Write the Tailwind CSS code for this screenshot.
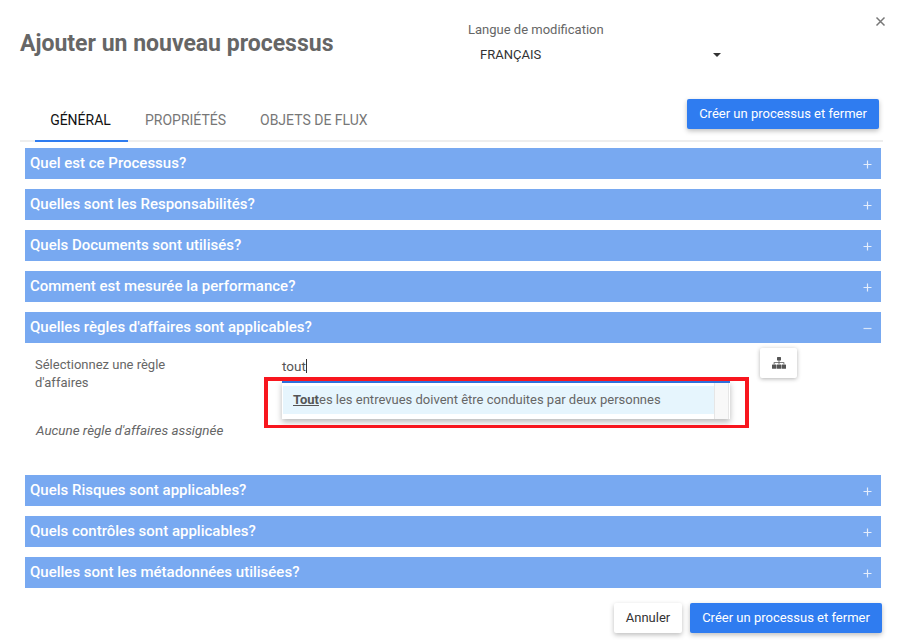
<!DOCTYPE html>
<html lang="fr">
<head>
<meta charset="utf-8">
<script src="https://cdn.jsdelivr.net/npm/@tailwindcss/browser@4"></script>
</head>
<body class="bg-white font-['Roboto',sans-serif] text-[#666]">
<div class="relative w-[903px] h-[641px] overflow-hidden">
  <!-- Header -->
  <header class="flex h-[99px] pl-[20px]">
    <h1 class="w-[448px] pt-[31px] text-[23px] leading-[26px] font-bold text-[#666]">Ajouter un nouveau processus</h1>
    <div class="pt-[22px]">
      <div class="text-[13px] leading-[16px] text-[#666]">Langue de modification</div>
      <div class="flex items-center w-[258px] h-[16px] mt-[9px] pl-[12px] text-[13px] text-[#333]">
        <span class="flex-1">FRANÇAIS</span>
        <span class="w-0 h-0 border-x-[4px] border-x-transparent border-t-[4px] border-t-[#333] mr-[5px]"></span>
      </div>
    </div>
    <button class="absolute left-[875px] top-[16px] w-[11px] h-[11px] text-[#777]" aria-label="Fermer">
      <svg viewBox="0 0 11 11" class="w-[11px] h-[11px]"><path d="M1.5 1.5l8 8M9.5 1.5l-8 8" stroke="currentColor" stroke-width="1.5" fill="none"/></svg>
    </button>
  </header>

  <!-- Tabs -->
  <nav class="flex items-start justify-between h-[43px] mx-[20px] border-b-2 border-[#eee] relative">
    <div class="flex text-[14px] leading-[16px] ml-[15px]">
      <div class="relative w-[93px] h-[43px] pt-[13px] pr-[2px] text-center text-[#111]">GÉNÉRAL<span class="absolute left-0 right-0 bottom-0 h-[2px] bg-[#2f7cf0]"></span></div>
      <div class="w-[115px] pt-[13px] text-center text-[#777]">PROPRIÉTÉS</div>
      <div class="pt-[13px] ml-[17px] text-[#777]">OBJETS DE FLUX</div>
    </div>
    <button class="w-[192px] h-[30px] mr-[4px] rounded-[2px] bg-[#2f7cf0] text-white text-[13px] shadow-[0_2px_5px_rgba(0,0,0,0.26)]">Créer un processus et fermer</button>
  </nav>

  <!-- Accordion -->
  <main class="flex flex-col gap-[10px] w-[856px] ml-[25px] mt-[6px]">
    <div class="flex items-center justify-between h-[31px] pl-[5px] pr-[9px] bg-[#78a9f1] text-white text-[15px] font-medium"><span>Quel est ce Processus?</span><svg viewBox="0 0 9 9" class="w-[9px] h-[9px] mt-[1px] opacity-80"><path d="M4.5 0.5v8M0.5 4.5h8" stroke="#fff" stroke-width="1.2"/></svg></div>
    <div class="flex items-center justify-between h-[31px] pl-[5px] pr-[9px] bg-[#78a9f1] text-white text-[15px] font-medium"><span>Quelles sont les Responsabilités?</span><svg viewBox="0 0 9 9" class="w-[9px] h-[9px] mt-[1px] opacity-80"><path d="M4.5 0.5v8M0.5 4.5h8" stroke="#fff" stroke-width="1.2"/></svg></div>
    <div class="flex items-center justify-between h-[31px] pl-[5px] pr-[9px] bg-[#78a9f1] text-white text-[15px] font-medium"><span>Quels Documents sont utilisés?</span><svg viewBox="0 0 9 9" class="w-[9px] h-[9px] mt-[1px] opacity-80"><path d="M4.5 0.5v8M0.5 4.5h8" stroke="#fff" stroke-width="1.2"/></svg></div>
    <div class="flex items-center justify-between h-[31px] pl-[5px] pr-[9px] bg-[#78a9f1] text-white text-[15px] font-medium"><span>Comment est mesurée la performance?</span><svg viewBox="0 0 9 9" class="w-[9px] h-[9px] mt-[1px] opacity-80"><path d="M4.5 0.5v8M0.5 4.5h8" stroke="#fff" stroke-width="1.2"/></svg></div>
    <div>
      <div class="flex items-center justify-between h-[31px] pl-[5px] pr-[9px] bg-[#78a9f1] text-white text-[15px] font-medium"><span>Quelles règles d'affaires sont applicables?</span><svg viewBox="0 0 9 9" class="w-[9px] h-[9px] mt-[1px] opacity-70"><path d="M0.5 4.5h8" stroke="#fff" stroke-width="1.2"/></svg></div>
      <div class="flex h-[122px] pl-[10px]">
        <div class="w-[247px] pt-[13px]">
          <div class="w-[150px] text-[13px] leading-[18px] text-[#666]">Sélectionnez une règle d'affaires</div>
          <div class="mt-[30px] pl-[1px] text-[13.4px] leading-[18px] italic text-[#666]">Aucune règle d'affaires assignée</div>
        </div>
        <div class="flex w-[478px] h-[30px] pt-[15px] text-[13.5px] leading-[16px] text-[#555]">tout<span class="w-px h-[14px] mt-[1px] bg-[#333]"></span></div>
        <button class="flex items-center justify-center w-[37px] h-[30px] mt-[5px] rounded-[2px] bg-white shadow-[0_1px_4px_rgba(0,0,0,0.3)]" aria-label="Organigramme">
          <svg viewBox="0 0 14 12" class="w-[14px] h-[12px]" fill="#555"><rect x="5" y="0" width="4" height="3.6" rx=".5"/><path d="M6.6 3h.8v2.2h4.9v2h-.8V6H7.4v1.2h-.8V6H2.5v1.2h-.8v-2h4.9z"/><rect x="0" y="7.4" width="4.4" height="4.4" rx=".6"/><rect x="4.8" y="7.4" width="4.4" height="4.4" rx=".6"/><rect x="9.6" y="7.4" width="4.4" height="4.4" rx=".6"/></svg>
        </button>
      </div>
    </div>
    <div class="flex items-center justify-between h-[31px] pl-[5px] pr-[9px] bg-[#78a9f1] text-white text-[15px] font-medium"><span>Quels Risques sont applicables?</span><svg viewBox="0 0 9 9" class="w-[9px] h-[9px] mt-[1px] opacity-80"><path d="M4.5 0.5v8M0.5 4.5h8" stroke="#fff" stroke-width="1.2"/></svg></div>
    <div class="flex items-center justify-between h-[31px] pl-[5px] pr-[9px] bg-[#78a9f1] text-white text-[15px] font-medium"><span>Quels contrôles sont applicables?</span><svg viewBox="0 0 9 9" class="w-[9px] h-[9px] mt-[1px] opacity-80"><path d="M4.5 0.5v8M0.5 4.5h8" stroke="#fff" stroke-width="1.2"/></svg></div>
    <div class="flex items-center justify-between h-[31px] pl-[5px] pr-[9px] bg-[#78a9f1] text-white text-[15px] font-medium"><span>Quelles sont les métadonnées utilisées?</span><svg viewBox="0 0 9 9" class="w-[9px] h-[9px] mt-[1px] opacity-80"><path d="M4.5 0.5v8M0.5 4.5h8" stroke="#fff" stroke-width="1.2"/></svg></div>
  </main>

  <!-- Footer -->
  <footer class="flex justify-end gap-[8px] mt-[15px] pr-[21px]">
    <button class="w-[68px] h-[30px] rounded-[2px] bg-white text-[#333] text-[13px] shadow-[0_2px_5px_rgba(0,0,0,0.26)]">Annuler</button>
    <button class="w-[192px] h-[30px] rounded-[2px] bg-[#2f7cf0] text-white text-[13px] shadow-[0_2px_5px_rgba(0,0,0,0.26)]">Créer un processus et fermer</button>
  </footer>

  <!-- Autocomplete dropdown -->
  <div class="absolute left-[282px] top-[381px] w-[448px] h-[38px] border-t-2 border-[#2f6fdc] bg-white shadow-[0_3px_6px_rgba(0,0,0,0.28)] flex">
    <div class="flex-1 mt-[3px] ml-[1px] h-[28px] pl-[10px] bg-[#e6f5fd] text-[13px] leading-[28px] text-[#666]"><b class="font-bold underline text-[#555]">Tout</b>es les entrevues doivent être conduites par deux personnes</div>
    <div class="w-[15px] bg-[#f8f8f8] border-x border-[#e6e6e6] mr-[1px]"></div>
  </div>
  <!-- Red annotation -->
  <div class="absolute left-[264px] top-[377px] w-[485px] h-[51px] border-[4px] border-b-[3px] border-[#f8161e] pointer-events-none"></div>
</div>
</body>
</html>
